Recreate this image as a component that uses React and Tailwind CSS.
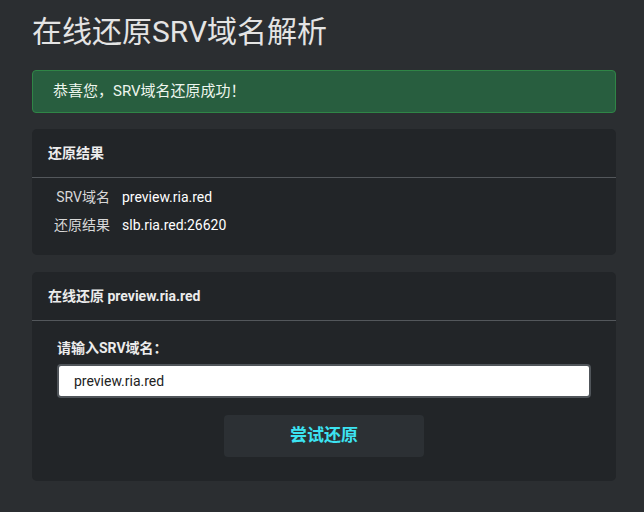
export default function App() {
  const font = { fontFamily: 'Roboto, "Noto Sans CJK SC", sans-serif' };
  return (
    <div className="min-h-[512px] bg-[#2b2e31] pl-[32px] pr-[28px] pt-[12px] pb-[30px] text-[#e6e6e6]" style={font}>
      <h1 className="text-[30px] leading-[40px] text-[#e4e4e4] font-normal">在线还原SRV域名解析</h1>

      <div className="mt-[18px] h-[43px] flex items-center px-[20px] rounded-[4px] border border-[#2f8546] bg-[#285e3f] text-[15px] text-[#eef6ee]">
        恭喜您，SRV域名还原成功！
      </div>

      <div className="mt-[16px] rounded-[5px] bg-[#222528]">
        <div className="h-[49px] flex items-center px-[16px] border-b border-[#53575b] text-[14px] font-bold text-[#ececec]">
          还原结果
        </div>
        <div className="pt-[5px] pb-[16px] text-[14px]">
          <div className="flex h-[28px] items-center">
            <span className="w-[78px] text-right text-[#d8d8d8]">SRV域名</span>
            <span className="ml-[12px] text-white">preview.ria.red</span>
          </div>
          <div className="flex h-[28px] items-center">
            <span className="w-[78px] text-right text-[#d8d8d8]">还原结果</span>
            <span className="ml-[12px] text-white">slb.ria.red:26620</span>
          </div>
        </div>
      </div>

      <div className="mt-[17px] rounded-[5px] bg-[#222528]">
        <div className="h-[49px] flex items-center px-[16px] border-b border-[#53575b] text-[14px] font-bold text-[#ececec]">
          在线还原 preview.ria.red
        </div>
        <div className="px-[25px] pt-[17px] pb-[24px]">
          <div className="text-[14px] font-bold text-[#ececec] leading-[20px]">请输入SRV域名：</div>
          <input
            className="mt-[6px] block w-full h-[34px] rounded-[4px] border-2 border-[#50555a] bg-white px-[15px] text-[14px] text-[#222] outline-none"
            defaultValue="preview.ria.red"
            style={font}
          />
          <div className="mt-[17px] flex justify-center">
            <button
              className="w-[200px] h-[42px] rounded-[4px] bg-[#2c3034] text-[17px] font-bold text-[#3ce3f2]"
              style={font}
            >
              尝试还原
            </button>
          </div>
        </div>
      </div>
    </div>
  );
}
